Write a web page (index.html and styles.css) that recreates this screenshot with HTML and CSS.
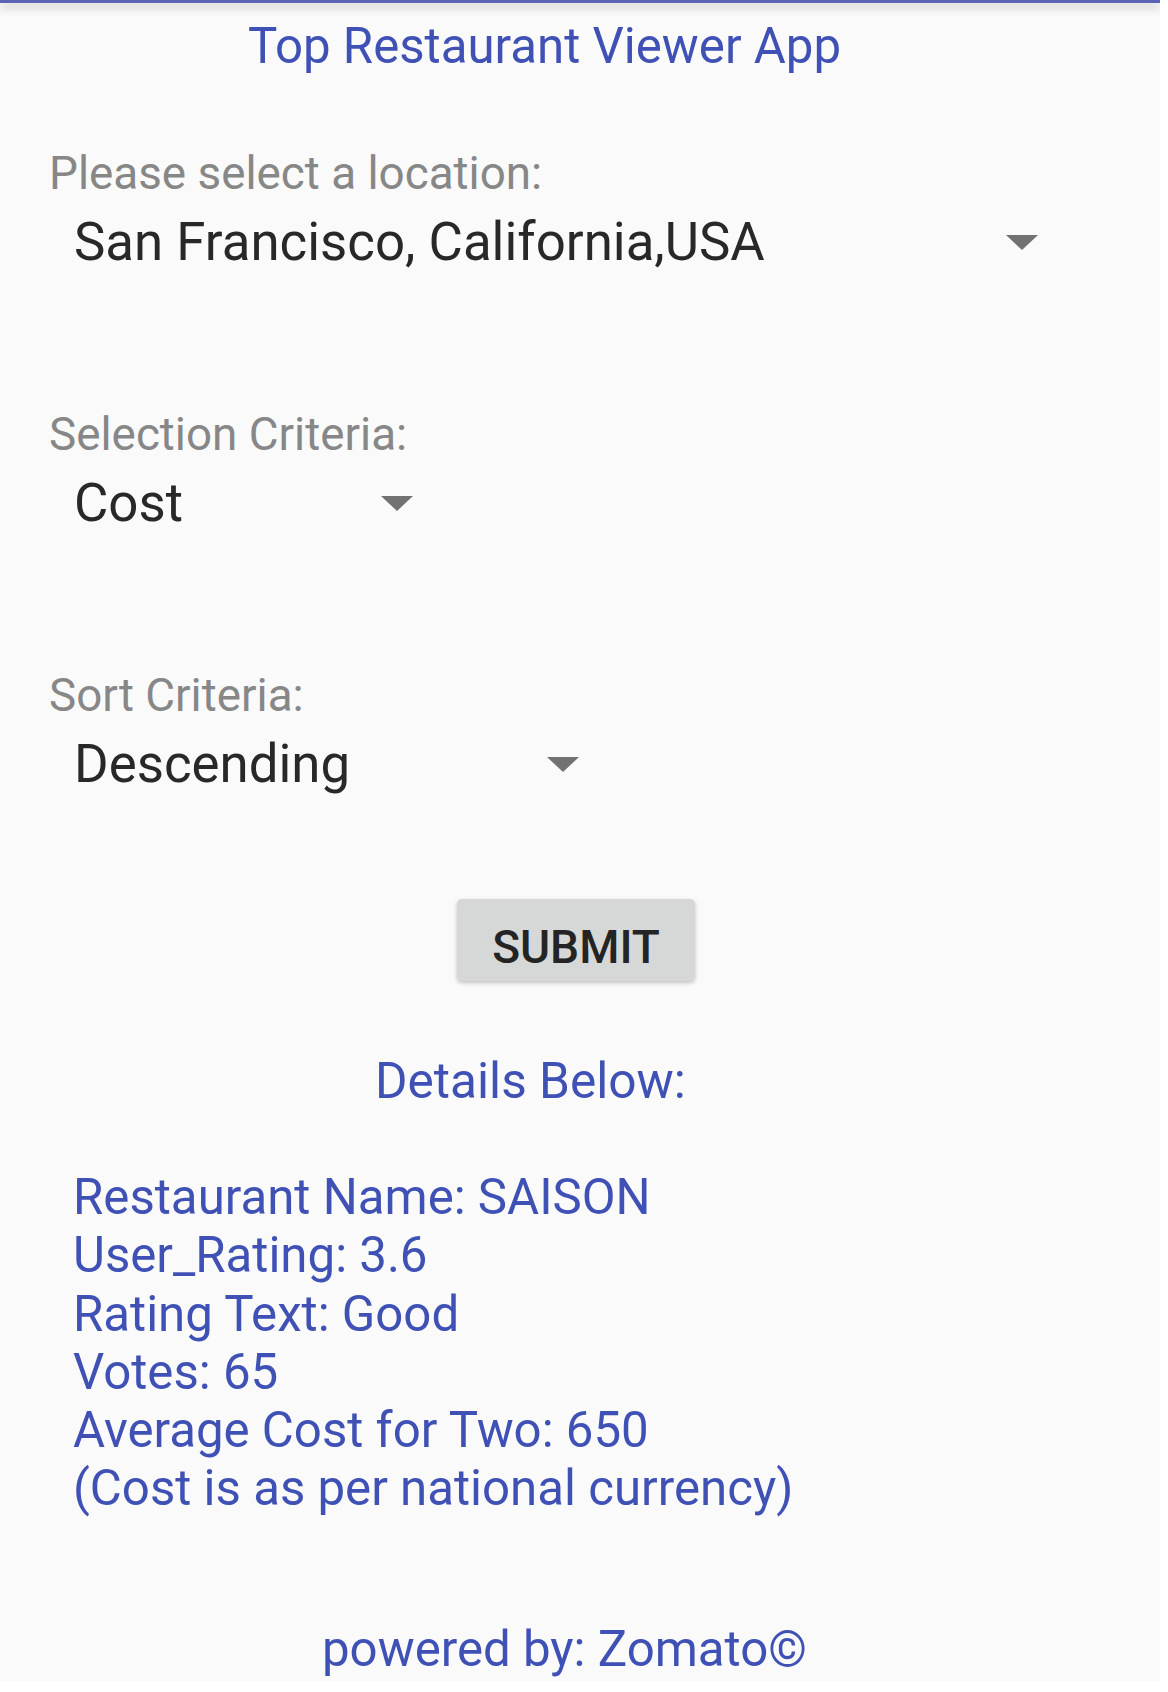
FILE: index.html
```html
<!DOCTYPE html>
<html lang="en">
<head>
<meta charset="utf-8">
<title>Top Restaurant Viewer App</title>
<link rel="stylesheet" href="styles.css">
</head>
<body>
<div class="screen">
  <div class="appbar-edge"></div>
  <h1 class="title">Top Restaurant Viewer App</h1>

  <section class="field">
    <div class="label">Please select a location:</div>
    <div class="spinner spinner-location">
      <span class="value">San Francisco, California,USA</span>
      <span class="arrow"></span>
    </div>
  </section>

  <section class="field field-next">
    <div class="label">Selection Criteria:</div>
    <div class="spinner spinner-criteria">
      <span class="value">Cost</span>
      <span class="arrow"></span>
    </div>
  </section>

  <section class="field field-next">
    <div class="label">Sort Criteria:</div>
    <div class="spinner spinner-sort">
      <span class="value">Descending</span>
      <span class="arrow"></span>
    </div>
  </section>

  <div class="actions">
    <button class="submit" type="button">SUBMIT</button>
  </div>

  <div class="details-heading">Details Below:</div>

  <div class="details">
    <div>Restaurant Name: SAISON</div>
    <div>User_Rating: 3.6</div>
    <div>Rating Text: Good</div>
    <div>Votes: 65</div>
    <div>Average Cost for Two: 650</div>
    <div>(Cost is as per national currency)</div>
  </div>

  <div class="footer">powered by: Zomato©</div>
</div>
</body>
</html>
```

FILE: styles.css
```css
* {
  box-sizing: border-box;
}

html, body {
  margin: 0;
  padding: 0;
  background: #ffffff;
}

body {
  font-family: Roboto, "Noto Sans", "Liberation Sans", sans-serif;
}

.screen {
  width: 1160px;
  height: 1681px;
  background: #fafafa;
  overflow: hidden;
}

.appbar-edge {
  height: 3px;
  background: #5a65b6;
  box-shadow: 0 4px 10px rgba(0, 0, 0, 0.32);
  position: relative;
}

.title {
  margin: 14px 0 0 0;
  padding-left: 248px;
  font-size: 49.2px;
  font-weight: 400;
  line-height: normal;
  color: #3f51b5;
}

.field {
  margin-top: 72px;
}

.field-next {
  margin-top: 135px;
}

.label {
  padding-left: 49px;
  font-size: 45.8px;
  line-height: normal;
  color: #878787;
}

.spinner {
  margin-top: 11px;
  margin-left: 49px;
  padding-left: 25px;
  display: flex;
  align-items: center;
  justify-content: space-between;
  font-size: 52.8px;
  line-height: normal;
  color: #282828;
}

.spinner-location {
  width: 989px;
}

.spinner-criteria {
  width: 364px;
}

.spinner-sort {
  width: 530px;
}

.arrow {
  width: 0;
  height: 0;
  border-left: 16px solid transparent;
  border-right: 16px solid transparent;
  border-top: 15px solid #727272;
}

.actions {
  margin-top: 104px;
  padding-left: 457px;
}

.submit {
  width: 238px;
  height: 82px;
  border: none;
  border-radius: 5px;
  background: #d6d7d7;
  box-shadow: 0 2px 4px rgba(0, 0, 0, 0.22);
  font-family: Roboto, "Noto Sans", "Liberation Sans", sans-serif;
  font-size: 46px;
  font-weight: 500;
  color: #242424;
  padding: 13px 0 0 0;
}

.details-heading {
  margin-top: 71px;
  padding-left: 375px;
  font-size: 49.6px;
  line-height: normal;
  color: #3f51b5;
}

.details {
  margin-top: 58px;
  padding-left: 73px;
  font-size: 49.2px;
  line-height: 58.3px;
  color: #3f51b5;
}

.footer {
  margin-top: 102px;
  padding-left: 322px;
  font-size: 49.2px;
  line-height: normal;
  color: #3f51b5;
}
```
